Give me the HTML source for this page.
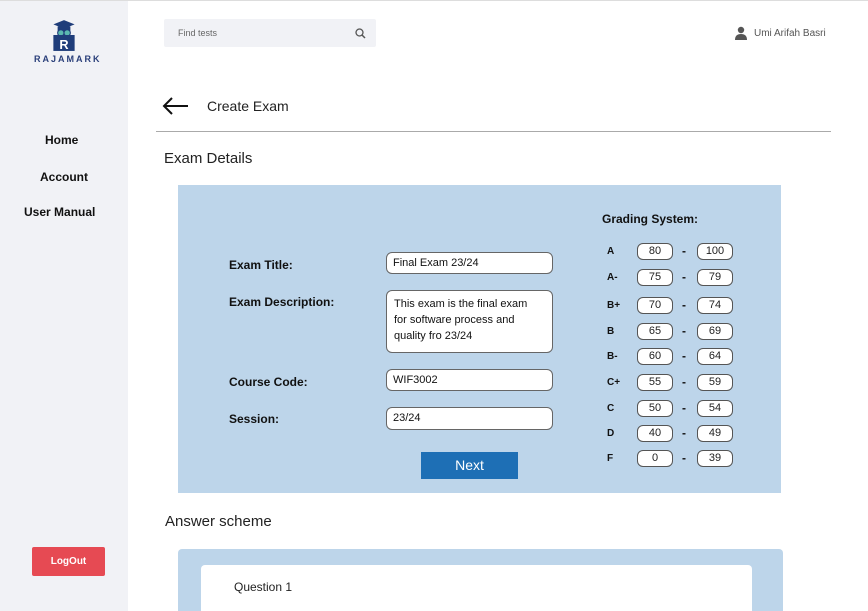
<!DOCTYPE html>
<html><head><meta charset="utf-8"><style>
*{margin:0;padding:0;box-sizing:border-box}
html,body{width:868px;height:611px;overflow:hidden}
body{background:#fff;font-family:"Liberation Sans",sans-serif;color:#111;position:relative}
.a{position:absolute;white-space:nowrap}
.b{font-weight:bold}
.in{position:absolute;background:#fff;border:1px solid #666;border-radius:6px;font-size:11px;padding-left:6px;line-height:20px}
.g{position:absolute;background:#fff;border:1px solid #555;border-radius:6px;font-size:11px;text-align:center;line-height:15px;height:17px;width:36px;color:#222}
.gl{position:absolute;font-size:10px;font-weight:bold;left:607px;line-height:17px}
.gd{position:absolute;font-size:12px;font-weight:bold;left:682px;line-height:17px}
</style></head><body>
<div class="a" style="left:0;top:0;width:868px;height:1px;background:#ddd"></div>
<div class="a" style="left:0;top:1px;width:128px;height:610px;background:#f1f2f6"></div>
<svg class="a" style="left:51px;top:18px" width="26" height="34" viewBox="0 0 24 32">
<path d="M2 6 L12 2 L22 6 L12 10 Z" fill="#1f3d7a"/><rect x="6" y="8" width="12" height="5" fill="#1f3d7a"/>
<circle cx="9" cy="14" r="3" fill="#5bb8b0" stroke="#1f3d7a"/><circle cx="15" cy="14" r="3" fill="#5bb8b0" stroke="#1f3d7a"/>
<rect x="2" y="16" width="20" height="15" fill="#1f3d7a"/>
<text x="12" y="29" font-size="12" font-weight="bold" fill="#fff" text-anchor="middle" font-family="Liberation Sans">R</text></svg>
<div class="a b" style="left:34px;top:54px;font-size:9px;letter-spacing:2px;color:#2a3f7a">RAJAMARK</div>
<div class="a b" style="left:45px;top:133px;font-size:12px">Home</div>
<div class="a b" style="left:40px;top:170px;font-size:12px">Account</div>
<div class="a b" style="left:24px;top:205px;font-size:12px">User Manual</div>
<div class="a b" style="left:32px;top:547px;width:73px;height:29px;background:#e64a53;border-radius:2px;color:#fff;font-size:10px;text-align:center;line-height:29px">LogOut</div>

<div class="a" style="left:164px;top:19px;width:212px;height:28px;background:#f1f2f6;border-radius:2px"></div>
<div class="a" style="left:178px;top:28px;font-size:9px;color:#666">Find tests</div>
<svg class="a" style="left:355px;top:28px" width="11" height="11"><circle cx="4.5" cy="4.5" r="3.5" stroke="#555" stroke-width="1.3" fill="none"/><path d="M7 7 L10 10" stroke="#555" stroke-width="1.5"/></svg>
<svg class="a" style="left:735px;top:26px" width="12" height="14"><circle cx="6" cy="4" r="3.2" fill="#555"/><path d="M0 14 Q0 8 6 8 Q12 8 12 14Z" fill="#555"/></svg>
<div class="a" style="left:754px;top:28px;font-size:10px;color:#555">Umi Arifah Basri</div>

<svg class="a" style="left:161px;top:96px" width="29" height="20"><path d="M27 10 H3 M11 2 L3 10 L11 18" stroke="#111" stroke-width="2" fill="none"/></svg>
<div class="a" style="left:207px;top:98px;font-size:14px;color:#222">Create Exam</div>
<div class="a" style="left:156px;top:131px;width:675px;height:1px;background:#aaa"></div>
<div class="a" style="left:164px;top:150px;font-size:15px;color:#222">Exam Details</div>

<div class="a" style="left:178px;top:185px;width:603px;height:308px;background:#bdd5ea"></div>
<div class="a b" style="left:229px;top:258px;font-size:12px">Exam Title:</div>
<div class="a b" style="left:229px;top:295px;font-size:12px">Exam Description:</div>
<div class="a b" style="left:229px;top:375px;font-size:12px">Course Code:</div>
<div class="a b" style="left:229px;top:412px;font-size:12px">Session:</div>
<div class="in" style="left:386px;top:252px;width:167px;height:22px">Final Exam 23/24</div>
<div class="in" style="left:386px;top:290px;width:167px;height:63px;line-height:16px;padding:5px 14px 5px 7px;white-space:normal">This exam is the final exam for software process and quality fro 23/24</div>
<div class="in" style="left:386px;top:369px;width:167px;height:22px">WIF3002</div>
<div class="in" style="left:386px;top:407px;width:167px;height:23px">23/24</div>
<div class="a" style="left:421px;top:452px;width:97px;height:27px;background:#1e6fb5;color:#fff;font-size:14px;text-align:center;line-height:27px">Next</div>

<div class="a b" style="left:602px;top:212px;font-size:12px">Grading System:</div>
<div class="gl" style="top:243px">A</div><div class="g" style="left:637px;top:243px">80</div><div class="gd" style="top:243px">-</div><div class="g" style="left:697px;top:243px">100</div>
<div class="gl" style="top:269px">A-</div><div class="g" style="left:637px;top:269px">75</div><div class="gd" style="top:269px">-</div><div class="g" style="left:697px;top:269px">79</div>
<div class="gl" style="top:297px">B+</div><div class="g" style="left:637px;top:297px">70</div><div class="gd" style="top:297px">-</div><div class="g" style="left:697px;top:297px">74</div>
<div class="gl" style="top:323px">B</div><div class="g" style="left:637px;top:323px">65</div><div class="gd" style="top:323px">-</div><div class="g" style="left:697px;top:323px">69</div>
<div class="gl" style="top:348px">B-</div><div class="g" style="left:637px;top:348px">60</div><div class="gd" style="top:348px">-</div><div class="g" style="left:697px;top:348px">64</div>
<div class="gl" style="top:374px">C+</div><div class="g" style="left:637px;top:374px">55</div><div class="gd" style="top:374px">-</div><div class="g" style="left:697px;top:374px">59</div>
<div class="gl" style="top:400px">C</div><div class="g" style="left:637px;top:400px">50</div><div class="gd" style="top:400px">-</div><div class="g" style="left:697px;top:400px">54</div>
<div class="gl" style="top:425px">D</div><div class="g" style="left:637px;top:425px">40</div><div class="gd" style="top:425px">-</div><div class="g" style="left:697px;top:425px">49</div>
<div class="gl" style="top:450px">F</div><div class="g" style="left:637px;top:450px">0</div><div class="gd" style="top:450px">-</div><div class="g" style="left:697px;top:450px">39</div>

<div class="a" style="left:165px;top:513px;font-size:15px;color:#222">Answer scheme</div>
<div class="a" style="left:178px;top:549px;width:605px;height:62px;background:#bdd5ea;border-radius:4px 4px 0 0"></div>
<div class="a" style="left:201px;top:565px;width:551px;height:46px;background:#fff;border-radius:4px 4px 0 0"></div>
<div class="a" style="left:234px;top:580px;font-size:12px;color:#222">Question 1</div>
</body></html>
